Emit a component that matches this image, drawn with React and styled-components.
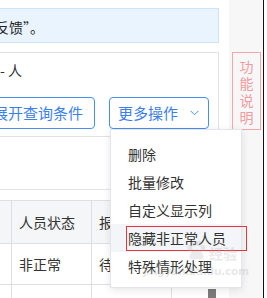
import React from "react";
import styled, { createGlobalStyle } from "styled-components";

const Global = createGlobalStyle`
  html, body { margin: 0; padding: 0; background: #fff; }
  body { font-family: "Noto Sans CJK SC", "Noto Sans", sans-serif; color: #333; }
`;

const Root = styled.div`
  position: relative;
  display: flex;
  width: 267px;
  height: 298px;
  overflow: hidden;
  background: #fff;
`;

const Main = styled.div`
  width: 229px;
  height: 298px;
  flex: none;
  display: flex;
  flex-direction: column;
  overflow: hidden;
  & > * { flex-shrink: 0; }
`;

const InfoBox = styled.div`
  box-sizing: border-box;
  margin: 8px 0 0 -20px;
  width: 239px;
  height: 35px;
  padding: 3px 0 0 14px;
  display: flex;
  align-items: center;
  background: #e9f4ff;
  border: 1px solid #cde3f8;
  font-size: 14px;
  line-height: 20px;
  color: #222;
  white-space: nowrap;
`;

const Card = styled.div`
  box-sizing: border-box;
  margin: 9px 0 0 -20px;
  width: 239px;
  height: 85px;
  padding: 7px 0 0 19px;
  border: 1px solid #e2e2e2;
  display: flex;
  flex-direction: column;
`;

const Summary = styled.div`
  font-size: 14px;
  line-height: 20px;
  height: 20px;
  color: #333;
  white-space: nowrap;
`;

const ButtonRow = styled.div`
  display: flex;
  gap: 14px;
  margin: 17px 0 0 -19px;
`;

const OutlineButton = styled.button`
  box-sizing: border-box;
  height: 32px;
  flex: none;
  padding: 0 ${(p) => p.$pr || 11}px 0 ${(p) => p.$pl || 11}px;
  display: flex;
  align-items: center;
  gap: 12px;
  background: #fff;
  border: 1px solid #4a8ef2;
  border-radius: 4px;
  color: #3b80ea;
  font-family: inherit;
  font-size: 15px;
  line-height: 20px;
  white-space: nowrap;
`;

const Toolbar = styled.div`
  height: 52px;
  border-bottom: 1px solid #e4e4e4;
  margin-left: -20px;
`;

const Table = styled.div`
  margin: 10px 0 0 -68px;
  display: grid;
  grid-template-columns: repeat(4, 80px);
  border-top: 1px solid #dedfe3;
  width: 320px;
`;

const Cell = styled.div`
  box-sizing: border-box;
  height: ${(p) => (p.$head ? 43 : 41)}px;
  padding-left: 7px;
  display: flex;
  align-items: center;
  border-right: 1px solid #dedfe3;
  border-bottom: 1px solid #dedfe3;
  background: ${(p) => (p.$head ? "#f5f6f8" : "#fff")};
  font-size: 14px;
  color: #333;
  white-space: nowrap;
  overflow: hidden;
`;

const Sidebar = styled.div`
  box-sizing: border-box;
  width: 35px;
  height: 298px;
  flex: none;
  background: #f7f7f7;
  border-right: 1px solid #111;
  padding: 52px 0 0 3px;
`;

const HelpBox = styled.div`
  box-sizing: border-box;
  width: 29px;
  height: 78px;
  padding-top: 5px;
  border: 1px solid #f5a6ab;
  display: flex;
  flex-direction: column;
  align-items: center;
  color: #f19aa0;
  font-size: 14px;
  line-height: 17px;
`;

const Menu = styled.div`
  position: absolute;
  left: 110px;
  top: 129px;
  box-sizing: border-box;
  width: 132px;
  padding: 10px 0 7px;
  background: #fff;
  border: 1px solid #e4e6eb;
  box-shadow: 0 2px 8px rgba(0, 0, 0, 0.1);
`;

const MenuItem = styled.div`
  height: 28px;
  padding-left: 17px;
  display: flex;
  align-items: center;
  font-size: 14px;
  color: #333;
  white-space: nowrap;
  background: ${(p) => (p.$hover ? "#f4f5f8" : "transparent")};
`;

const Mark = styled.div`
  position: absolute;
  left: 126px;
  top: 226px;
  width: 121px;
  height: 25px;
  box-sizing: border-box;
  border: 1px solid #e8363b;
  pointer-events: none;
`;

const Thumb = styled.div`
  position: absolute;
  left: 208px;
  top: 289px;
  width: 8px;
  height: 14px;
  background: #7b7b7b;
`;

const Watermark = styled.div`
  position: absolute;
  left: 143px;
  top: 240px;
  width: 100px;
  pointer-events: none;
  color: rgba(175, 175, 175, 0.3);
`;

const WmTop = styled.div`
  display: flex;
  align-items: flex-end;
  gap: 2px;
  padding-left: 42px;
  font-size: 14px;
  font-weight: bold;
  line-height: 18px;
`;

const WmUrl = styled.div`
  margin-top: 3px;
  font-family: "DejaVu Sans", sans-serif;
  font-size: 10.5px;
  font-weight: bold;
  line-height: 12px;
  letter-spacing: -0.2px;
`;

const Chevron = () => (
  <svg width="9" height="6" viewBox="0 0 9 6" fill="none">
    <polyline points="0.5,0.8 4.5,4.8 8.5,0.8" stroke="#4a8ef2" strokeWidth="1" />
  </svg>
);

const Paw = () => (
  <svg width="22" height="22" viewBox="0 0 22 22" fill="rgba(175,175,175,0.25)">
    <ellipse cx="5" cy="8" rx="2.5" ry="3" />
    <ellipse cx="9" cy="3.5" rx="2.5" ry="3" />
    <ellipse cx="14" cy="3.5" rx="2.5" ry="3" />
    <ellipse cx="18" cy="8" rx="2.5" ry="3" />
    <path d="M11.5 9c-4 0-7 5-7 8 0 3 3 3 7 2 4 1 7 1 7-2 0-3-3-8-7-8z" />
  </svg>
);

const menuItems = ["删除", "批量修改", "自定义显示列", "隐藏非正常人员", "特殊情形处理"];

export default function App() {
  return (
    <>
      <Global />
      <Root>
        <Main>
          <InfoBox>反馈”。</InfoBox>
          <Card>
            <Summary>- 人</Summary>
            <ButtonRow>
              <OutlineButton>展开查询条件</OutlineButton>
              <OutlineButton $pl={8} $pr={9}>
                更多操作
                <Chevron />
              </OutlineButton>
            </ButtonRow>
          </Card>
          <Toolbar />
          <Table>
            <Cell $head>姓名</Cell>
            <Cell $head>人员状态</Cell>
            <Cell $head>报送状态</Cell>
            <Cell $head>操作</Cell>
            <Cell>张三</Cell>
            <Cell>非正常</Cell>
            <Cell>待报送</Cell>
            <Cell>编辑</Cell>
            <Cell>李四</Cell>
            <Cell>正常</Cell>
            <Cell>已报送</Cell>
            <Cell>编辑</Cell>
          </Table>
        </Main>
        <Sidebar>
          <HelpBox>
            <span>功</span>
            <span>能</span>
            <span>说</span>
            <span>明</span>
          </HelpBox>
        </Sidebar>
        <Thumb />
        <Menu>
          {menuItems.map((t, i) => (
            <MenuItem key={t} $hover={i === 3}>
              {t}
            </MenuItem>
          ))}
        </Menu>
        <Mark />
        <Watermark>
          <WmTop>
            <Paw />
            <span>经验</span>
          </WmTop>
          <WmUrl>jingyan.baidu.com</WmUrl>
        </Watermark>
      </Root>
    </>
  );
}
